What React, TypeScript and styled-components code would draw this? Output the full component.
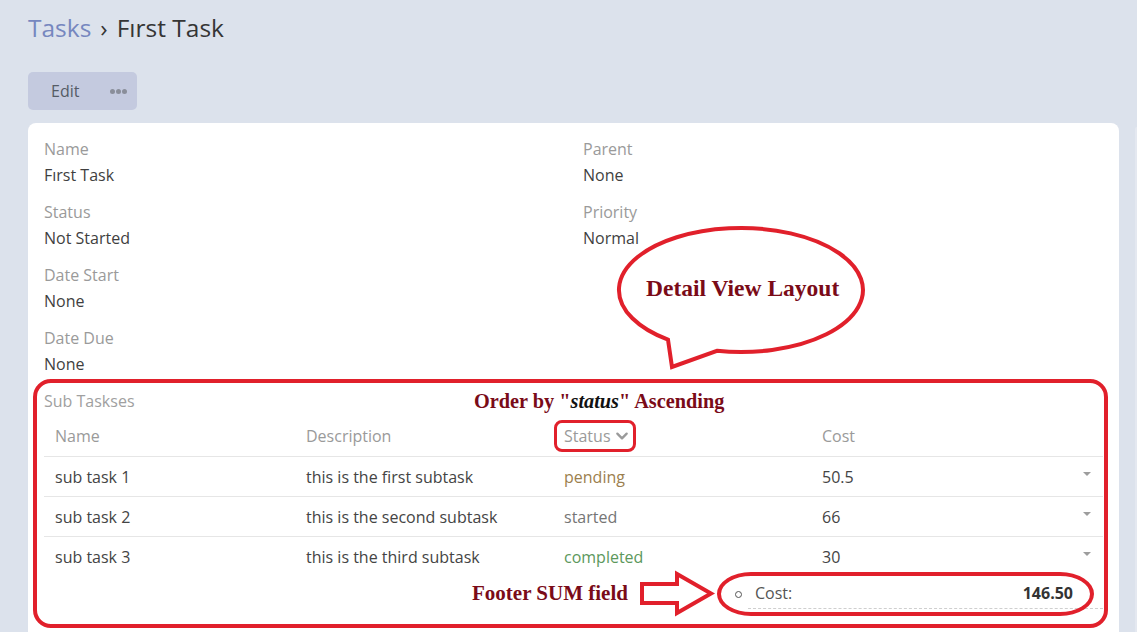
import React from "react";
import styled, { createGlobalStyle } from "styled-components";

const Global = createGlobalStyle`
  html, body { margin: 0; padding: 0; background: #dce2ec; }
  body { font-family: "Open Sans", "Noto Sans", sans-serif; color: #3c3c3c; overflow: hidden; }
  * { box-sizing: border-box; }
`;

const Page = styled.div`
  position: relative;
  width: 1137px;
  height: 632px;
  overflow: hidden;
  padding: 12px 0 0 28px;
`;

const Breadcrumb = styled.h1`
  margin: 0;
  font-size: 24.5px;
  font-weight: 400;
  line-height: 32px;
  color: #3a3a3a;
  display: flex;
  gap: 9px;
`;

const Crumb = styled.span<{ $link?: boolean }>`
  color: ${(p) => (p.$link ? "#7687bf" : "#353535")};
`;

const Toolbar = styled.div`
  margin-top: 28px;
  display: flex;
  width: 109px;
  height: 38px;
  border-radius: 5px;
  background: #c4cadf;
  align-items: center;
`;

const ToolButton = styled.button`
  border: 0;
  background: transparent;
  font-family: inherit;
  font-size: 16px;
  color: #555b66;
  height: 100%;
  padding: 0 0 0 23px;
  cursor: pointer;
`;

const Dots = styled.span`
  margin-left: auto;
  margin-right: 10px;
  display: flex;
  gap: 1px;
  & > i {
    display: block;
    width: 5px;
    height: 5px;
    border-radius: 50%;
    background: #8a8e9a;
  }
`;

const Columns = styled.div`
  margin-top: 13px;
  display: flex;
  gap: 16px;
  align-items: flex-start;
`;

const Card = styled.section`
  width: 1091px;
  flex: none;
  background: #ffffff;
  border-radius: 8px;
  padding: 14px 16px 40px;
`;

const SideCard = styled.div`
  flex: 1;
  height: 520px;
  margin-top: 4px;
  background: #e4e8f0;
  border-radius: 8px 0 0 0;
`;

const FieldGrid = styled.div`
  display: grid;
  grid-template-columns: 539px 1fr;
`;

const FieldCol = styled.div`
  display: flex;
  flex-direction: column;
`;

const Field = styled.div`
  margin-bottom: 13px;
`;

const Label = styled.div`
  font-size: 16px;
  line-height: 24px;
  color: #9a9a9a;
`;

const Value = styled.div`
  margin-top: 2px;
  font-size: 16px;
  line-height: 24px;
  color: #3f3f3f;
`;

const SectionTitle = styled.div`
  margin-top: 0;
  font-size: 16px;
  line-height: 24px;
  color: #a0a0a0;
`;

const Row = styled.div<{ $head?: boolean }>`
  display: grid;
  grid-template-columns: 251px 258px 258px 1fr 32px;
  align-items: center;
  height: ${(p) => (p.$head ? "43px" : "40px")};
  padding-top: ${(p) => (p.$head ? "2px" : "0")};
  border-top: ${(p) => (p.$head ? "0" : "1px solid #e6e6e6")};
  font-size: 16px;
  color: ${(p) => (p.$head ? "#9a9a9a" : "#444")};
`;

const Cell = styled.div<{ $tone?: string }>`
  padding-left: 11px;
  color: ${(p) => p.$tone || "inherit"};
  display: flex;
  align-items: center;
  gap: 4px;
`;

const Caret = styled.div`
  justify-self: center;
  margin-bottom: 5px;
  width: 0;
  height: 0;
  border-left: 4px solid transparent;
  border-right: 4px solid transparent;
  border-top: 4px solid #9d9d9d;
`;

const Footer = styled.div`
  display: flex;
  height: 40px;
  padding-top: 5px;
`;

const SumItem = styled.div`
  margin-left: auto;
  width: 376px;
  display: flex;
  align-items: flex-start;
`;

const Bullet = styled.span`
  margin: 10px 0 0 8px;
  width: 7px;
  height: 7px;
  border: 1px solid #555;
  border-radius: 50%;
  flex: none;
`;

const SumLine = styled.div`
  margin-left: 6px;
  flex: 1;
  display: flex;
  justify-content: space-between;
  padding: 0 30px 3px 7px;
  border-bottom: 1px dashed #cfcfcf;
  font-size: 16px;
  line-height: 24px;
  color: #555;
`;

const SumValue = styled.b`
  color: #333;
  font-weight: 700;
`;

/* ---------- annotation layer (drawn over the page) ---------- */

const Frame = styled.div<{ $l: number; $t: number; $w: number; $h: number; $r: string; $bw?: number }>`
  position: absolute;
  left: ${(p) => p.$l}px;
  top: ${(p) => p.$t}px;
  width: ${(p) => p.$w}px;
  height: ${(p) => p.$h}px;
  border: ${(p) => p.$bw ?? 4}px solid #e1202b;
  border-radius: ${(p) => p.$r};
  pointer-events: none;
`;

const Note = styled.div<{ $l: number; $t: number; $size?: number }>`
  position: absolute;
  left: ${(p) => p.$l}px;
  top: ${(p) => p.$t}px;
  font-family: "Liberation Serif", "DejaVu Serif", serif;
  font-weight: 700;
  font-size: ${(p) => p.$size ?? 20}px;
  line-height: 24px;
  color: #7a0b18;
  white-space: nowrap;
  & em {
    color: #111;
  }
`;

const Drawing = styled.svg`
  position: absolute;
  left: 0;
  top: 0;
  pointer-events: none;
`;

const ChevronDown = () => (
  <svg width="14" height="14" viewBox="0 0 24 24" fill="none" stroke="#9a9a9a" strokeWidth="4" strokeLinecap="round" strokeLinejoin="round">
    <path d="M4 8l8 8 8-8" />
  </svg>
);

const rows = [
  { name: "sub task 1", desc: "this is the first subtask", status: "pending", tone: "#9c7f4e", cost: "50.5" },
  { name: "sub task 2", desc: "this is the second subtask", status: "started", tone: "#757575", cost: "66" },
  { name: "sub task 3", desc: "this is the third subtask", status: "completed", tone: "#5c985c", cost: "30" },
];

export default function App() {
  return (
    <>
      <Global />
      <Page>
        <Breadcrumb>
          <Crumb $link>Tasks</Crumb>
          <Crumb>›</Crumb>
          <Crumb>Fırst Task</Crumb>
        </Breadcrumb>
        <Toolbar>
          <ToolButton>Edit</ToolButton>
          <Dots>
            <i />
            <i />
            <i />
          </Dots>
        </Toolbar>
        <Columns>
          <Card>
            <FieldGrid>
              <FieldCol>
                <Field>
                  <Label>Name</Label>
                  <Value>Fırst Task</Value>
                </Field>
                <Field>
                  <Label>Status</Label>
                  <Value>Not Started</Value>
                </Field>
                <Field>
                  <Label>Date Start</Label>
                  <Value>None</Value>
                </Field>
                <Field>
                  <Label>Date Due</Label>
                  <Value>None</Value>
                </Field>
              </FieldCol>
              <FieldCol>
                <Field>
                  <Label>Parent</Label>
                  <Value>None</Value>
                </Field>
                <Field>
                  <Label>Priority</Label>
                  <Value>Normal</Value>
                </Field>
              </FieldCol>
            </FieldGrid>
            <SectionTitle>Sub Taskses</SectionTitle>
            <Row $head>
              <Cell>Name</Cell>
              <Cell>Description</Cell>
              <Cell>
                Status <ChevronDown />
              </Cell>
              <Cell>Cost</Cell>
              <div />
            </Row>
            {rows.map((r) => (
              <Row key={r.name}>
                <Cell>{r.name}</Cell>
                <Cell>{r.desc}</Cell>
                <Cell $tone={r.tone}>{r.status}</Cell>
                <Cell>{r.cost}</Cell>
                <Caret />
              </Row>
            ))}
            <Footer>
              <SumItem>
                <Bullet />
                <SumLine>
                  <span>Cost:</span>
                  <SumValue>146.50</SumValue>
                </SumLine>
              </SumItem>
            </Footer>
          </Card>
          <SideCard />
        </Columns>

        {/* annotations */}
        <Frame $l={33} $t={379} $w={1075} $h={249} $r="18px" />
        <Frame $l={554} $t={420} $w={82} $h={32} $r="8px" $bw={3.5} />
        <Frame $l={717} $t={572} $w={377} $h={44} $r="34px / 22px" />
        <Drawing width="1137" height="632" viewBox="0 0 1137 632">
          <path
            d="M668 339.7 A122 62 0 1 1 717 350.8 L672 367 Z"
            fill="#ffffff"
            stroke="#e1202b"
            strokeWidth="4"
            strokeLinejoin="miter"
          />
          <path
            d="M642 584 L677 584 L677 574 L711 593.5 L677 613 L677 603 L642 603 Z"
            fill="#ffffff"
            stroke="#e1202b"
            strokeWidth="4"
            strokeLinejoin="miter"
          />
        </Drawing>
        <Note $l={646} $t={276} $size={23.5}>Detail View Layout</Note>
        <Note $l={474} $t={389} $size={20.3}>
          Order by "<em>status</em>" Ascending
        </Note>
        <Note $l={472} $t={581} $size={21}>Footer SUM field</Note>
      </Page>
    </>
  );
}
